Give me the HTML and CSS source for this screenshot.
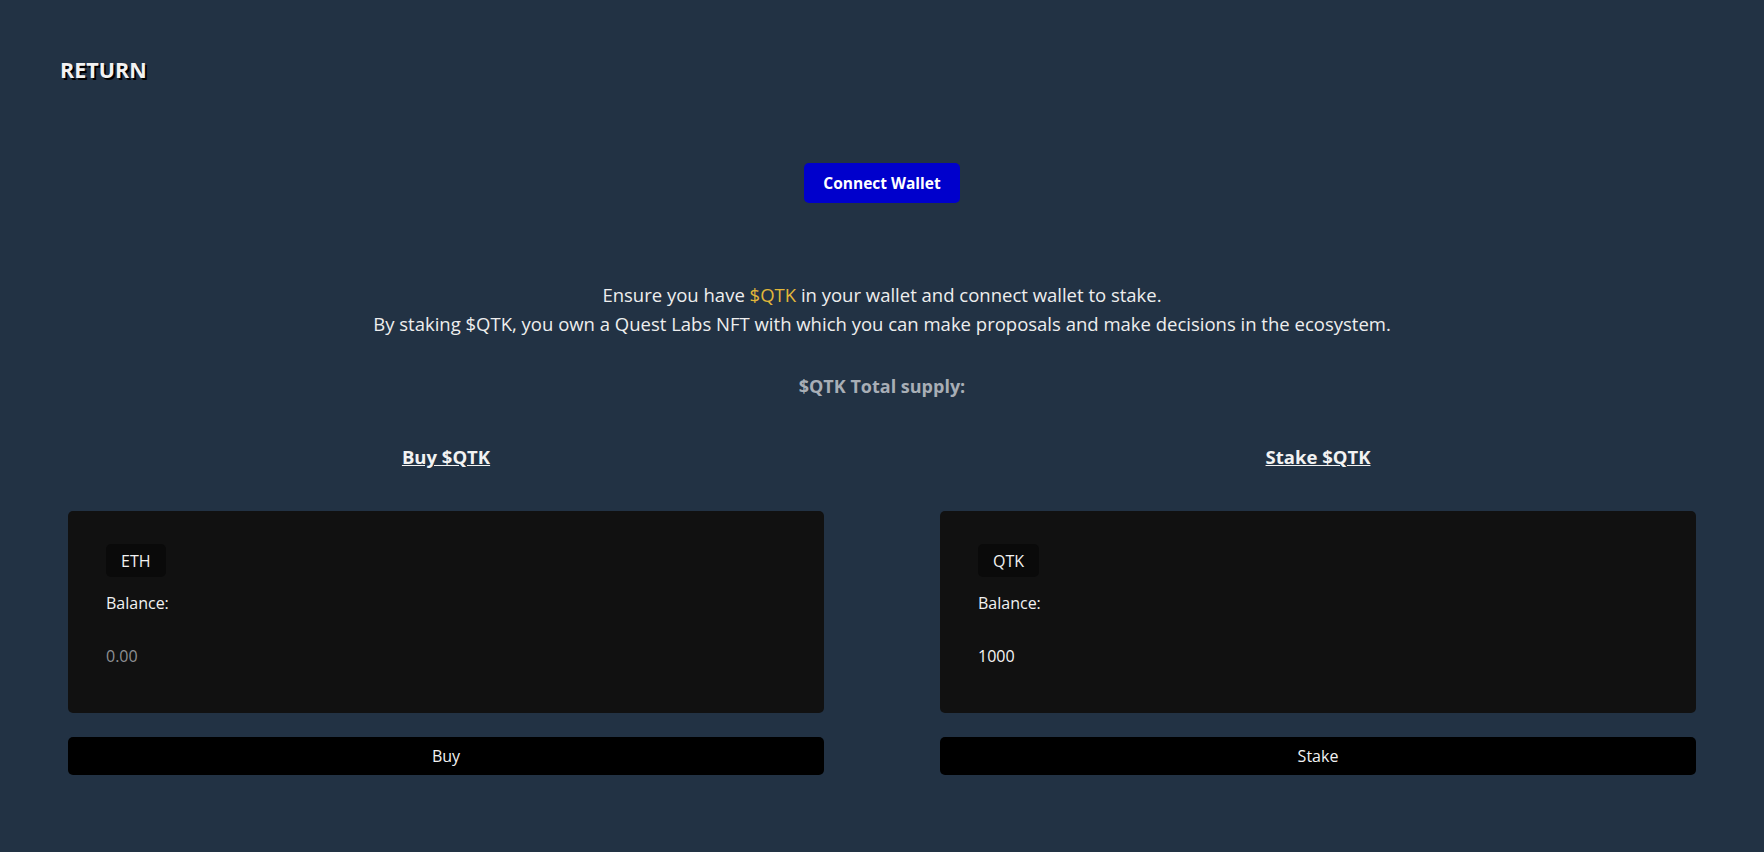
FILE: index.html
```html
<!DOCTYPE html>
<html lang="en">
<head>
<meta charset="utf-8">
<title>Stake $QTK</title>
<link rel="stylesheet" href="styles.css">
</head>
<body>
<header class="topbar">
  <a class="return" href="#">RETURN</a>
</header>
<main class="main">
  <div class="connect-row">
    <button class="connect-btn">Connect Wallet</button>
  </div>
  <div class="info">
    <p>Ensure you have <span class="token">$QTK</span> in your wallet and connect wallet to stake.</p>
    <p>By staking $QTK, you own a Quest Labs NFT with which you can make proposals and make decisions in the ecosystem.</p>
  </div>
  <div class="supply">$QTK Total supply:</div>
  <section class="columns">
    <div class="col">
      <h2 class="col-title">Buy $QTK</h2>
      <div class="card">
        <span class="chip">ETH</span>
        <div class="balance">Balance:</div>
        <div class="amount muted">0.00</div>
      </div>
      <button class="action-btn">Buy</button>
    </div>
    <div class="col">
      <h2 class="col-title">Stake $QTK</h2>
      <div class="card">
        <span class="chip">QTK</span>
        <div class="balance">Balance:</div>
        <div class="amount">1000</div>
      </div>
      <button class="action-btn">Stake</button>
    </div>
  </section>
</main>
</body>
</html>
```
FILE: styles.css
```css
* { box-sizing: border-box; }
html, body {
  margin: 0;
  padding: 0;
  background: #223244;
}
body {
  font-family: "Open Sans", "Noto Sans", sans-serif;
  color: #eeeeee;
  min-height: 852px;
}
.topbar {
  padding: 55px 60px 0;
  height: 110px;
  line-height: 30px;
}
.return {
  color: #f2f2f2;
  text-decoration: none;
  font-weight: 700;
  font-size: 21.5px;
  text-shadow: 2px 2px 0 #000;
}
.main {
  padding: 0 68px;
}
.connect-row {
  display: flex;
  justify-content: center;
  padding-top: 53px;
}
.connect-btn {
  background: #0000cc;
  color: #fff;
  border: none;
  border-radius: 5px;
  font-family: inherit;
  font-weight: 700;
  font-size: 15.5px;
  height: 40px;
  padding: 0 19px;
}
.info {
  margin-top: 77px;
  text-align: center;
  font-size: 18.5px;
  line-height: 29px;
  color: #eeeeee;
}
.info p { margin: 0; }
.token { color: #e1b73a; }
.supply {
  margin-top: 36px;
  text-align: center;
  font-size: 18px;
  line-height: 24px;
  font-weight: 700;
  color: #a8aeb6;
}
.columns {
  margin-top: 47px;
  display: grid;
  grid-template-columns: 1fr 1fr;
  column-gap: 116px;
}
.col {
  display: flex;
  flex-direction: column;
}
.col-title {
  margin: 0;
  text-align: center;
  font-size: 18.5px;
  font-weight: 700;
  text-decoration: underline;
  color: #f2f2f2;
  line-height: 24px;
}
.card {
  margin-top: 42px;
  background: #111111;
  border-radius: 5px;
  height: 202px;
  padding: 33px 38px;
  display: flex;
  flex-direction: column;
  align-items: flex-start;
  font-size: 16px;
  line-height: 22px;
}
.chip {
  background: #0a0a0a;
  border-radius: 5px;
  height: 33px;
  padding: 0 15px;
  display: flex;
  align-items: center;
  color: #f2f2f2;
}
.balance {
  margin-top: 15px;
  color: #f2f2f2;
}
.amount {
  margin-top: 31px;
  color: #f5f5f5;
}
.amount.muted { color: #8d8f93; }
.action-btn {
  margin-top: 24px;
  height: 38px;
  background: #000;
  color: #f2f2f2;
  border: none;
  border-radius: 5px;
  font-family: inherit;
  font-size: 16px;
}
```
